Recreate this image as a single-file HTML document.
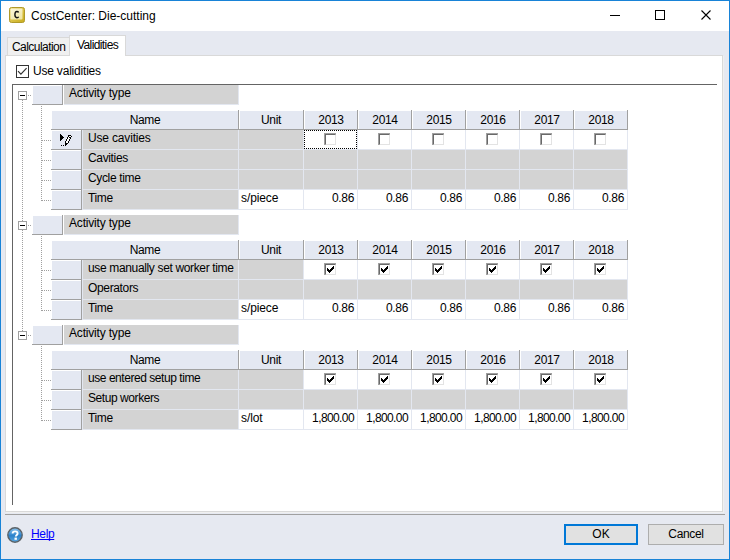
<!DOCTYPE html><html><head><meta charset="utf-8"><style>
html,body{margin:0;padding:0;}
body{width:730px;height:560px;position:relative;overflow:hidden;background:#e6e9f1;font-family:"Liberation Sans",sans-serif;font-size:12px;color:#000;letter-spacing:-0.35px;}
div{box-sizing:border-box;}
.t{position:absolute;white-space:nowrap;line-height:13px;height:13px;}
.c{position:absolute;white-space:nowrap;line-height:13px;height:13px;text-align:center;}
.r{position:absolute;white-space:nowrap;line-height:13px;height:13px;text-align:right;}
.dotv{position:absolute;width:1px;background:repeating-linear-gradient(to bottom,#a0a0a0 0 1px,transparent 1px 2px);}
.doth{position:absolute;height:1px;background:repeating-linear-gradient(to right,#a0a0a0 0 1px,transparent 1px 2px);}
</style></head><body>

<div style="position:absolute;left:0px;top:0px;width:730px;height:1px;background:#1883d7;"></div>
<div style="position:absolute;left:0px;top:559px;width:730px;height:1px;background:#1883d7;"></div>
<div style="position:absolute;left:0px;top:0px;width:1px;height:560px;background:#1883d7;"></div>
<div style="position:absolute;left:729px;top:0px;width:1px;height:560px;background:#1883d7;"></div>
<div style="position:absolute;left:1px;top:1px;width:728px;height:30px;background:#ffffff;"></div>
<svg style="position:absolute;left:9px;top:7px" width="16" height="16" viewBox="0 0 16 16"><defs><linearGradient id="ig" x1="0" y1="0" x2="1" y2="1"><stop offset="0" stop-color="#ecd870"/><stop offset="1" stop-color="#c8ac1c"/></linearGradient><linearGradient id="ig2" x1="0" y1="0" x2="0.7" y2="1"><stop offset="0" stop-color="#fbf7dc"/><stop offset="1" stop-color="#f0e6a8"/></linearGradient></defs><rect x="0.5" y="0.5" width="15" height="15" rx="2" fill="url(#ig)" stroke="#b09a2a" stroke-width="1"/><rect x="1.5" y="1.5" width="12" height="11" rx="1" fill="url(#ig2)"/><path d="M9.6 5.5 C9.3 4.8 8.7 4.5 7.9 4.5 C6.7 4.5 5.9 5.5 5.9 7.6 C5.9 9.7 6.7 10.7 7.9 10.7 C8.7 10.7 9.3 10.4 9.6 9.7" fill="none" stroke="#111" stroke-width="1.4"/></svg>
<div class="t" style="left:31px;top:9px;font-size:12px;line-height:15px;height:15px;color:#000;letter-spacing:0">CostCenter: Die-cutting</div>
<div style="position:absolute;left:610px;top:15px;width:10px;height:1px;background:#000;"></div>
<div style="position:absolute;left:655px;top:10px;width:10px;height:10px;border:1px solid #000"></div>
<svg style="position:absolute;left:700px;top:9px" width="12" height="12" viewBox="0 0 12 12"><path d="M1.5 1.5 L10.5 10.5 M10.5 1.5 L1.5 10.5" stroke="#000" stroke-width="1.1"/></svg>
<div style="position:absolute;left:7px;top:37px;width:63px;height:19px;background:#f0f0f0;border:1px solid #d9d9d9;border-bottom:none"></div>
<div style="position:absolute;left:5px;top:55px;width:718px;height:457px;background:#fff;border:1px solid #d9d9d9"></div>
<div style="position:absolute;left:723px;top:56px;width:1px;height:457px;background:#f0f0f0;"></div>
<div style="position:absolute;left:6px;top:512px;width:718px;height:1px;background:#f0f0f0;"></div>
<div style="position:absolute;left:69px;top:35px;width:57px;height:21px;background:#fff;border:1px solid #d9d9d9;border-bottom:none"></div>
<div class="t" style="left:12px;top:41px;letter-spacing:-0.55px">Calculation</div>
<div class="t" style="left:77px;top:39px;letter-spacing:-0.6px">Validities</div>
<div style="position:absolute;left:16px;top:65px;width:13px;height:13px;border:1px solid #333;background:#fff"></div>
<svg style="position:absolute;left:16px;top:65px" width="13" height="13" viewBox="0 0 13 13"><path d="M2 6.2 L4.9 9.1 L10.6 3.2" fill="none" stroke="#333" stroke-width="1.2"/></svg>
<div class="t" style="left:33px;top:65px;letter-spacing:-0.2px">Use validities</div>
<div style="position:absolute;left:12px;top:84px;width:705px;height:1px;background:#646464;"></div>
<div style="position:absolute;left:12px;top:84px;width:1px;height:421px;background:#646464;"></div>
<div class="dotv" style="left:22px;top:100px;height:231px"></div>
<div style="position:absolute;left:18px;top:91px;width:9px;height:9px;border:1px solid #a0a0a0;background:#fff"></div>
<div style="position:absolute;left:20px;top:95px;width:5px;height:1px;background:#000;"></div>
<div class="doth" style="left:28px;top:95px;width:4px"></div>
<div style="position:absolute;left:33px;top:86px;width:29px;height:18px;background:#e4e8f2;"></div>
<div style="position:absolute;left:62px;top:85px;width:1px;height:20px;background:#a0a0a0;"></div>
<div style="position:absolute;left:32px;top:104px;width:31px;height:1px;background:#a0a0a0;"></div>
<div style="position:absolute;left:64px;top:85px;width:174px;height:19px;background:#d3d3d3;"></div>
<div style="position:absolute;left:238px;top:85px;width:1px;height:20px;background:#e3e7f0;"></div>
<div style="position:absolute;left:64px;top:104px;width:175px;height:1px;background:#e3e7f0;"></div>
<div class="t" style="left:69px;top:87px;letter-spacing:-0.18px">Activity type</div>
<div style="position:absolute;left:52px;top:111px;width:576px;height:18px;background:#e4e8f2;"></div>
<div style="position:absolute;left:51px;top:129px;width:577px;height:1px;background:#a0a0a0;"></div>
<div style="position:absolute;left:238px;top:110px;width:1px;height:20px;background:#a0a0a0;"></div>
<div style="position:absolute;left:239px;top:111px;width:1px;height:18px;background:#fff;"></div>
<div style="position:absolute;left:303px;top:110px;width:1px;height:20px;background:#a0a0a0;"></div>
<div style="position:absolute;left:304px;top:111px;width:1px;height:18px;background:#fff;"></div>
<div style="position:absolute;left:357px;top:110px;width:1px;height:20px;background:#a0a0a0;"></div>
<div style="position:absolute;left:358px;top:111px;width:1px;height:18px;background:#fff;"></div>
<div style="position:absolute;left:411px;top:110px;width:1px;height:20px;background:#a0a0a0;"></div>
<div style="position:absolute;left:412px;top:111px;width:1px;height:18px;background:#fff;"></div>
<div style="position:absolute;left:465px;top:110px;width:1px;height:20px;background:#a0a0a0;"></div>
<div style="position:absolute;left:466px;top:111px;width:1px;height:18px;background:#fff;"></div>
<div style="position:absolute;left:519px;top:110px;width:1px;height:20px;background:#a0a0a0;"></div>
<div style="position:absolute;left:520px;top:111px;width:1px;height:18px;background:#fff;"></div>
<div style="position:absolute;left:573px;top:110px;width:1px;height:20px;background:#a0a0a0;"></div>
<div style="position:absolute;left:574px;top:111px;width:1px;height:18px;background:#fff;"></div>
<div style="position:absolute;left:627px;top:110px;width:1px;height:20px;background:#a0a0a0;"></div>
<div class="c" style="left:52px;top:114px;width:186px">Name</div>
<div class="c" style="left:239px;top:114px;width:64px">Unit</div>
<div class="c" style="left:304px;top:114px;width:54px">2013</div>
<div class="c" style="left:358px;top:114px;width:54px">2014</div>
<div class="c" style="left:412px;top:114px;width:54px">2015</div>
<div class="c" style="left:466px;top:114px;width:54px">2016</div>
<div class="c" style="left:520px;top:114px;width:54px">2017</div>
<div class="c" style="left:574px;top:114px;width:54px">2018</div>
<div class="dotv" style="left:41px;top:106px;height:95px"></div>
<div class="doth" style="left:42px;top:140px;width:9px"></div>
<div style="position:absolute;left:52px;top:130px;width:30px;height:20px;background:#e4e8f2;border-right:1px solid #a0a0a0;border-bottom:1px solid #a0a0a0"></div>
<div style="position:absolute;left:51px;top:149px;width:1px;height:1px;background:#a0a0a0;"></div>
<div style="position:absolute;left:52px;top:130px;width:29px;height:1px;background:#fff;"></div>
<div style="position:absolute;left:82px;top:130px;width:1px;height:20px;background:#e3e7f0;"></div>
<div style="position:absolute;left:83px;top:130px;width:155px;height:19px;background:#d3d3d3;"></div>
<div style="position:absolute;left:83px;top:149px;width:545px;height:1px;background:#e3e7f0;"></div>
<div class="t" style="left:88px;top:132px;letter-spacing:-0.17px">Use cavities</div>
<div style="position:absolute;left:238px;top:130px;width:1px;height:19px;background:#e3e7f0;"></div>
<div style="position:absolute;left:239px;top:130px;width:64px;height:19px;background:#d3d3d3;"></div>
<div style="position:absolute;left:303px;top:130px;width:1px;height:19px;background:#e3e7f0;"></div>
<div style="position:absolute;left:304px;top:130px;width:53px;height:19px;background:#fff;"></div>
<div style="position:absolute;left:357px;top:130px;width:1px;height:19px;background:#e3e7f0;"></div>
<div style="position:absolute;left:324px;top:133px;width:12px;height:12px;background:#fff;border-top:1px solid #a0a0a0;border-left:1px solid #a0a0a0"><div style="width:11px;height:11px;border-top:1px solid #696969;border-left:1px solid #696969;border-right:1px solid #e3e3e3;border-bottom:1px solid #e3e3e3"></div></div>
<div style="position:absolute;left:358px;top:130px;width:53px;height:19px;background:#fff;"></div>
<div style="position:absolute;left:411px;top:130px;width:1px;height:19px;background:#e3e7f0;"></div>
<div style="position:absolute;left:378px;top:133px;width:12px;height:12px;background:#fff;border-top:1px solid #a0a0a0;border-left:1px solid #a0a0a0"><div style="width:11px;height:11px;border-top:1px solid #696969;border-left:1px solid #696969;border-right:1px solid #e3e3e3;border-bottom:1px solid #e3e3e3"></div></div>
<div style="position:absolute;left:412px;top:130px;width:53px;height:19px;background:#fff;"></div>
<div style="position:absolute;left:465px;top:130px;width:1px;height:19px;background:#e3e7f0;"></div>
<div style="position:absolute;left:432px;top:133px;width:12px;height:12px;background:#fff;border-top:1px solid #a0a0a0;border-left:1px solid #a0a0a0"><div style="width:11px;height:11px;border-top:1px solid #696969;border-left:1px solid #696969;border-right:1px solid #e3e3e3;border-bottom:1px solid #e3e3e3"></div></div>
<div style="position:absolute;left:466px;top:130px;width:53px;height:19px;background:#fff;"></div>
<div style="position:absolute;left:519px;top:130px;width:1px;height:19px;background:#e3e7f0;"></div>
<div style="position:absolute;left:486px;top:133px;width:12px;height:12px;background:#fff;border-top:1px solid #a0a0a0;border-left:1px solid #a0a0a0"><div style="width:11px;height:11px;border-top:1px solid #696969;border-left:1px solid #696969;border-right:1px solid #e3e3e3;border-bottom:1px solid #e3e3e3"></div></div>
<div style="position:absolute;left:520px;top:130px;width:53px;height:19px;background:#fff;"></div>
<div style="position:absolute;left:573px;top:130px;width:1px;height:19px;background:#e3e7f0;"></div>
<div style="position:absolute;left:540px;top:133px;width:12px;height:12px;background:#fff;border-top:1px solid #a0a0a0;border-left:1px solid #a0a0a0"><div style="width:11px;height:11px;border-top:1px solid #696969;border-left:1px solid #696969;border-right:1px solid #e3e3e3;border-bottom:1px solid #e3e3e3"></div></div>
<div style="position:absolute;left:574px;top:130px;width:53px;height:19px;background:#fff;"></div>
<div style="position:absolute;left:627px;top:130px;width:1px;height:19px;background:#e3e7f0;"></div>
<div style="position:absolute;left:594px;top:133px;width:12px;height:12px;background:#fff;border-top:1px solid #a0a0a0;border-left:1px solid #a0a0a0"><div style="width:11px;height:11px;border-top:1px solid #696969;border-left:1px solid #696969;border-right:1px solid #e3e3e3;border-bottom:1px solid #e3e3e3"></div></div>
<svg style="position:absolute;left:58px;top:132px" width="16" height="16" viewBox="0 0 16 16" shape-rendering="crispEdges"><path d="M10 4h3v1h-3z M9 5h2v1h-2z M8 6h4v1h-4z M8 7h3v2h-3z M7 9h3v2h-3z" fill="#fff"/><path d="M2 2h1v1h-1zM2 3h1v1h-1zM2 4h1v1h-1zM2 5h1v1h-1zM2 6h1v1h-1zM2 7h1v1h-1zM2 8h1v1h-1zM3 3h1v1h-1zM3 4h1v1h-1zM3 5h1v1h-1zM3 6h1v1h-1zM3 7h1v1h-1zM4 4h1v1h-1zM4 5h1v1h-1zM4 6h1v1h-1zM5 5h1v1h-1zM10 3h1v1h-1zM11 3h1v1h-1zM12 3h1v1h-1zM10 4h1v1h-1zM13 4h1v1h-1zM9 5h1v1h-1zM11 5h1v1h-1zM12 5h1v1h-1zM9 6h1v1h-1zM12 6h1v1h-1zM8 7h1v1h-1zM11 7h1v1h-1zM8 8h1v1h-1zM11 8h1v1h-1zM7 9h1v1h-1zM10 9h1v1h-1zM7 10h1v1h-1zM10 10h1v1h-1zM7 11h1v1h-1zM8 11h1v1h-1zM9 11h1v1h-1zM7 12h1v1h-1zM8 12h1v1h-1zM7 13h1v1h-1zM3 13h1v1h-1zM5 13h1v1h-1z" fill="#000"/></svg>
<div class="doth" style="left:42px;top:160px;width:9px"></div>
<div style="position:absolute;left:52px;top:150px;width:30px;height:20px;background:#e4e8f2;border-right:1px solid #a0a0a0;border-bottom:1px solid #a0a0a0"></div>
<div style="position:absolute;left:51px;top:169px;width:1px;height:1px;background:#a0a0a0;"></div>
<div style="position:absolute;left:52px;top:150px;width:29px;height:1px;background:#fff;"></div>
<div style="position:absolute;left:82px;top:150px;width:1px;height:20px;background:#e3e7f0;"></div>
<div style="position:absolute;left:83px;top:150px;width:155px;height:19px;background:#d3d3d3;"></div>
<div style="position:absolute;left:83px;top:169px;width:545px;height:1px;background:#e3e7f0;"></div>
<div class="t" style="left:88px;top:152px;">Cavities</div>
<div style="position:absolute;left:238px;top:150px;width:1px;height:19px;background:#e3e7f0;"></div>
<div style="position:absolute;left:239px;top:150px;width:64px;height:19px;background:#d3d3d3;"></div>
<div style="position:absolute;left:303px;top:150px;width:1px;height:19px;background:#e3e7f0;"></div>
<div style="position:absolute;left:304px;top:150px;width:53px;height:19px;background:#d3d3d3;"></div>
<div style="position:absolute;left:357px;top:150px;width:1px;height:19px;background:#e3e7f0;"></div>
<div style="position:absolute;left:358px;top:150px;width:53px;height:19px;background:#d3d3d3;"></div>
<div style="position:absolute;left:411px;top:150px;width:1px;height:19px;background:#e3e7f0;"></div>
<div style="position:absolute;left:412px;top:150px;width:53px;height:19px;background:#d3d3d3;"></div>
<div style="position:absolute;left:465px;top:150px;width:1px;height:19px;background:#e3e7f0;"></div>
<div style="position:absolute;left:466px;top:150px;width:53px;height:19px;background:#d3d3d3;"></div>
<div style="position:absolute;left:519px;top:150px;width:1px;height:19px;background:#e3e7f0;"></div>
<div style="position:absolute;left:520px;top:150px;width:53px;height:19px;background:#d3d3d3;"></div>
<div style="position:absolute;left:573px;top:150px;width:1px;height:19px;background:#e3e7f0;"></div>
<div style="position:absolute;left:574px;top:150px;width:53px;height:19px;background:#d3d3d3;"></div>
<div style="position:absolute;left:627px;top:150px;width:1px;height:19px;background:#e3e7f0;"></div>
<div class="doth" style="left:42px;top:180px;width:9px"></div>
<div style="position:absolute;left:52px;top:170px;width:30px;height:20px;background:#e4e8f2;border-right:1px solid #a0a0a0;border-bottom:1px solid #a0a0a0"></div>
<div style="position:absolute;left:51px;top:189px;width:1px;height:1px;background:#a0a0a0;"></div>
<div style="position:absolute;left:52px;top:170px;width:29px;height:1px;background:#fff;"></div>
<div style="position:absolute;left:82px;top:170px;width:1px;height:20px;background:#e3e7f0;"></div>
<div style="position:absolute;left:83px;top:170px;width:155px;height:19px;background:#d3d3d3;"></div>
<div style="position:absolute;left:83px;top:189px;width:545px;height:1px;background:#e3e7f0;"></div>
<div class="t" style="left:88px;top:172px;">Cycle time</div>
<div style="position:absolute;left:238px;top:170px;width:1px;height:19px;background:#e3e7f0;"></div>
<div style="position:absolute;left:239px;top:170px;width:64px;height:19px;background:#d3d3d3;"></div>
<div style="position:absolute;left:303px;top:170px;width:1px;height:19px;background:#e3e7f0;"></div>
<div style="position:absolute;left:304px;top:170px;width:53px;height:19px;background:#d3d3d3;"></div>
<div style="position:absolute;left:357px;top:170px;width:1px;height:19px;background:#e3e7f0;"></div>
<div style="position:absolute;left:358px;top:170px;width:53px;height:19px;background:#d3d3d3;"></div>
<div style="position:absolute;left:411px;top:170px;width:1px;height:19px;background:#e3e7f0;"></div>
<div style="position:absolute;left:412px;top:170px;width:53px;height:19px;background:#d3d3d3;"></div>
<div style="position:absolute;left:465px;top:170px;width:1px;height:19px;background:#e3e7f0;"></div>
<div style="position:absolute;left:466px;top:170px;width:53px;height:19px;background:#d3d3d3;"></div>
<div style="position:absolute;left:519px;top:170px;width:1px;height:19px;background:#e3e7f0;"></div>
<div style="position:absolute;left:520px;top:170px;width:53px;height:19px;background:#d3d3d3;"></div>
<div style="position:absolute;left:573px;top:170px;width:1px;height:19px;background:#e3e7f0;"></div>
<div style="position:absolute;left:574px;top:170px;width:53px;height:19px;background:#d3d3d3;"></div>
<div style="position:absolute;left:627px;top:170px;width:1px;height:19px;background:#e3e7f0;"></div>
<div class="doth" style="left:42px;top:200px;width:9px"></div>
<div style="position:absolute;left:52px;top:190px;width:30px;height:20px;background:#e4e8f2;border-right:1px solid #a0a0a0;border-bottom:1px solid #a0a0a0"></div>
<div style="position:absolute;left:51px;top:209px;width:1px;height:1px;background:#a0a0a0;"></div>
<div style="position:absolute;left:52px;top:190px;width:29px;height:1px;background:#fff;"></div>
<div style="position:absolute;left:82px;top:190px;width:1px;height:20px;background:#e3e7f0;"></div>
<div style="position:absolute;left:83px;top:190px;width:155px;height:19px;background:#d3d3d3;"></div>
<div style="position:absolute;left:83px;top:209px;width:545px;height:1px;background:#e3e7f0;"></div>
<div class="t" style="left:88px;top:192px;">Time</div>
<div style="position:absolute;left:238px;top:190px;width:1px;height:19px;background:#e3e7f0;"></div>
<div style="position:absolute;left:239px;top:190px;width:64px;height:19px;background:#fff;"></div>
<div class="t" style="left:241px;top:192px;letter-spacing:-0.1px">s/piece</div>
<div style="position:absolute;left:303px;top:190px;width:1px;height:19px;background:#e3e7f0;"></div>
<div style="position:absolute;left:304px;top:190px;width:53px;height:19px;background:#fff;"></div>
<div style="position:absolute;left:357px;top:190px;width:1px;height:19px;background:#e3e7f0;"></div>
<div class="r" style="left:304px;top:192px;width:50px;letter-spacing:-0.35px">0.86</div>
<div style="position:absolute;left:358px;top:190px;width:53px;height:19px;background:#fff;"></div>
<div style="position:absolute;left:411px;top:190px;width:1px;height:19px;background:#e3e7f0;"></div>
<div class="r" style="left:358px;top:192px;width:50px;letter-spacing:-0.35px">0.86</div>
<div style="position:absolute;left:412px;top:190px;width:53px;height:19px;background:#fff;"></div>
<div style="position:absolute;left:465px;top:190px;width:1px;height:19px;background:#e3e7f0;"></div>
<div class="r" style="left:412px;top:192px;width:50px;letter-spacing:-0.35px">0.86</div>
<div style="position:absolute;left:466px;top:190px;width:53px;height:19px;background:#fff;"></div>
<div style="position:absolute;left:519px;top:190px;width:1px;height:19px;background:#e3e7f0;"></div>
<div class="r" style="left:466px;top:192px;width:50px;letter-spacing:-0.35px">0.86</div>
<div style="position:absolute;left:520px;top:190px;width:53px;height:19px;background:#fff;"></div>
<div style="position:absolute;left:573px;top:190px;width:1px;height:19px;background:#e3e7f0;"></div>
<div class="r" style="left:520px;top:192px;width:50px;letter-spacing:-0.35px">0.86</div>
<div style="position:absolute;left:574px;top:190px;width:53px;height:19px;background:#fff;"></div>
<div style="position:absolute;left:627px;top:190px;width:1px;height:19px;background:#e3e7f0;"></div>
<div class="r" style="left:574px;top:192px;width:50px;letter-spacing:-0.35px">0.86</div>
<div style="position:absolute;left:304px;top:130px;width:53px;height:19px;border:1px dotted #000"></div>
<div style="position:absolute;left:18px;top:221px;width:9px;height:9px;border:1px solid #a0a0a0;background:#fff"></div>
<div style="position:absolute;left:20px;top:225px;width:5px;height:1px;background:#000;"></div>
<div class="doth" style="left:28px;top:225px;width:4px"></div>
<div style="position:absolute;left:33px;top:216px;width:29px;height:18px;background:#e4e8f2;"></div>
<div style="position:absolute;left:62px;top:215px;width:1px;height:20px;background:#a0a0a0;"></div>
<div style="position:absolute;left:32px;top:234px;width:31px;height:1px;background:#a0a0a0;"></div>
<div style="position:absolute;left:64px;top:215px;width:174px;height:19px;background:#d3d3d3;"></div>
<div style="position:absolute;left:238px;top:215px;width:1px;height:20px;background:#e3e7f0;"></div>
<div style="position:absolute;left:64px;top:234px;width:175px;height:1px;background:#e3e7f0;"></div>
<div class="t" style="left:69px;top:217px;letter-spacing:-0.18px">Activity type</div>
<div style="position:absolute;left:52px;top:241px;width:576px;height:18px;background:#e4e8f2;"></div>
<div style="position:absolute;left:51px;top:259px;width:577px;height:1px;background:#a0a0a0;"></div>
<div style="position:absolute;left:238px;top:240px;width:1px;height:20px;background:#a0a0a0;"></div>
<div style="position:absolute;left:239px;top:241px;width:1px;height:18px;background:#fff;"></div>
<div style="position:absolute;left:303px;top:240px;width:1px;height:20px;background:#a0a0a0;"></div>
<div style="position:absolute;left:304px;top:241px;width:1px;height:18px;background:#fff;"></div>
<div style="position:absolute;left:357px;top:240px;width:1px;height:20px;background:#a0a0a0;"></div>
<div style="position:absolute;left:358px;top:241px;width:1px;height:18px;background:#fff;"></div>
<div style="position:absolute;left:411px;top:240px;width:1px;height:20px;background:#a0a0a0;"></div>
<div style="position:absolute;left:412px;top:241px;width:1px;height:18px;background:#fff;"></div>
<div style="position:absolute;left:465px;top:240px;width:1px;height:20px;background:#a0a0a0;"></div>
<div style="position:absolute;left:466px;top:241px;width:1px;height:18px;background:#fff;"></div>
<div style="position:absolute;left:519px;top:240px;width:1px;height:20px;background:#a0a0a0;"></div>
<div style="position:absolute;left:520px;top:241px;width:1px;height:18px;background:#fff;"></div>
<div style="position:absolute;left:573px;top:240px;width:1px;height:20px;background:#a0a0a0;"></div>
<div style="position:absolute;left:574px;top:241px;width:1px;height:18px;background:#fff;"></div>
<div style="position:absolute;left:627px;top:240px;width:1px;height:20px;background:#a0a0a0;"></div>
<div class="c" style="left:52px;top:244px;width:186px">Name</div>
<div class="c" style="left:239px;top:244px;width:64px">Unit</div>
<div class="c" style="left:304px;top:244px;width:54px">2013</div>
<div class="c" style="left:358px;top:244px;width:54px">2014</div>
<div class="c" style="left:412px;top:244px;width:54px">2015</div>
<div class="c" style="left:466px;top:244px;width:54px">2016</div>
<div class="c" style="left:520px;top:244px;width:54px">2017</div>
<div class="c" style="left:574px;top:244px;width:54px">2018</div>
<div class="dotv" style="left:41px;top:236px;height:75px"></div>
<div class="doth" style="left:42px;top:270px;width:9px"></div>
<div style="position:absolute;left:52px;top:260px;width:30px;height:20px;background:#e4e8f2;border-right:1px solid #a0a0a0;border-bottom:1px solid #a0a0a0"></div>
<div style="position:absolute;left:51px;top:279px;width:1px;height:1px;background:#a0a0a0;"></div>
<div style="position:absolute;left:52px;top:260px;width:29px;height:1px;background:#fff;"></div>
<div style="position:absolute;left:82px;top:260px;width:1px;height:20px;background:#e3e7f0;"></div>
<div style="position:absolute;left:83px;top:260px;width:155px;height:19px;background:#d3d3d3;"></div>
<div style="position:absolute;left:83px;top:279px;width:545px;height:1px;background:#e3e7f0;"></div>
<div class="t" style="left:88px;top:262px;">use manually set worker time</div>
<div style="position:absolute;left:238px;top:260px;width:1px;height:19px;background:#e3e7f0;"></div>
<div style="position:absolute;left:239px;top:260px;width:64px;height:19px;background:#d3d3d3;"></div>
<div style="position:absolute;left:303px;top:260px;width:1px;height:19px;background:#e3e7f0;"></div>
<div style="position:absolute;left:304px;top:260px;width:53px;height:19px;background:#fff;"></div>
<div style="position:absolute;left:357px;top:260px;width:1px;height:19px;background:#e3e7f0;"></div>
<div style="position:absolute;left:324px;top:263px;width:12px;height:12px;background:#fff;border-top:1px solid #a0a0a0;border-left:1px solid #a0a0a0"><div style="width:11px;height:11px;border-top:1px solid #696969;border-left:1px solid #696969;border-right:1px solid #e3e3e3;border-bottom:1px solid #e3e3e3"></div></div>
<svg style="position:absolute;left:327px;top:266px" width="7" height="7" viewBox="0 0 7 7"><path d="M0 2h1v3h-1z M1 3h1v3h-1z M2 4h1v3h-1z M3 3h1v3h-1z M4 2h1v3h-1z M5 1h1v3h-1z M6 0h1v3h-1z" fill="#000"/></svg>
<div style="position:absolute;left:358px;top:260px;width:53px;height:19px;background:#fff;"></div>
<div style="position:absolute;left:411px;top:260px;width:1px;height:19px;background:#e3e7f0;"></div>
<div style="position:absolute;left:378px;top:263px;width:12px;height:12px;background:#fff;border-top:1px solid #a0a0a0;border-left:1px solid #a0a0a0"><div style="width:11px;height:11px;border-top:1px solid #696969;border-left:1px solid #696969;border-right:1px solid #e3e3e3;border-bottom:1px solid #e3e3e3"></div></div>
<svg style="position:absolute;left:381px;top:266px" width="7" height="7" viewBox="0 0 7 7"><path d="M0 2h1v3h-1z M1 3h1v3h-1z M2 4h1v3h-1z M3 3h1v3h-1z M4 2h1v3h-1z M5 1h1v3h-1z M6 0h1v3h-1z" fill="#000"/></svg>
<div style="position:absolute;left:412px;top:260px;width:53px;height:19px;background:#fff;"></div>
<div style="position:absolute;left:465px;top:260px;width:1px;height:19px;background:#e3e7f0;"></div>
<div style="position:absolute;left:432px;top:263px;width:12px;height:12px;background:#fff;border-top:1px solid #a0a0a0;border-left:1px solid #a0a0a0"><div style="width:11px;height:11px;border-top:1px solid #696969;border-left:1px solid #696969;border-right:1px solid #e3e3e3;border-bottom:1px solid #e3e3e3"></div></div>
<svg style="position:absolute;left:435px;top:266px" width="7" height="7" viewBox="0 0 7 7"><path d="M0 2h1v3h-1z M1 3h1v3h-1z M2 4h1v3h-1z M3 3h1v3h-1z M4 2h1v3h-1z M5 1h1v3h-1z M6 0h1v3h-1z" fill="#000"/></svg>
<div style="position:absolute;left:466px;top:260px;width:53px;height:19px;background:#fff;"></div>
<div style="position:absolute;left:519px;top:260px;width:1px;height:19px;background:#e3e7f0;"></div>
<div style="position:absolute;left:486px;top:263px;width:12px;height:12px;background:#fff;border-top:1px solid #a0a0a0;border-left:1px solid #a0a0a0"><div style="width:11px;height:11px;border-top:1px solid #696969;border-left:1px solid #696969;border-right:1px solid #e3e3e3;border-bottom:1px solid #e3e3e3"></div></div>
<svg style="position:absolute;left:489px;top:266px" width="7" height="7" viewBox="0 0 7 7"><path d="M0 2h1v3h-1z M1 3h1v3h-1z M2 4h1v3h-1z M3 3h1v3h-1z M4 2h1v3h-1z M5 1h1v3h-1z M6 0h1v3h-1z" fill="#000"/></svg>
<div style="position:absolute;left:520px;top:260px;width:53px;height:19px;background:#fff;"></div>
<div style="position:absolute;left:573px;top:260px;width:1px;height:19px;background:#e3e7f0;"></div>
<div style="position:absolute;left:540px;top:263px;width:12px;height:12px;background:#fff;border-top:1px solid #a0a0a0;border-left:1px solid #a0a0a0"><div style="width:11px;height:11px;border-top:1px solid #696969;border-left:1px solid #696969;border-right:1px solid #e3e3e3;border-bottom:1px solid #e3e3e3"></div></div>
<svg style="position:absolute;left:543px;top:266px" width="7" height="7" viewBox="0 0 7 7"><path d="M0 2h1v3h-1z M1 3h1v3h-1z M2 4h1v3h-1z M3 3h1v3h-1z M4 2h1v3h-1z M5 1h1v3h-1z M6 0h1v3h-1z" fill="#000"/></svg>
<div style="position:absolute;left:574px;top:260px;width:53px;height:19px;background:#fff;"></div>
<div style="position:absolute;left:627px;top:260px;width:1px;height:19px;background:#e3e7f0;"></div>
<div style="position:absolute;left:594px;top:263px;width:12px;height:12px;background:#fff;border-top:1px solid #a0a0a0;border-left:1px solid #a0a0a0"><div style="width:11px;height:11px;border-top:1px solid #696969;border-left:1px solid #696969;border-right:1px solid #e3e3e3;border-bottom:1px solid #e3e3e3"></div></div>
<svg style="position:absolute;left:597px;top:266px" width="7" height="7" viewBox="0 0 7 7"><path d="M0 2h1v3h-1z M1 3h1v3h-1z M2 4h1v3h-1z M3 3h1v3h-1z M4 2h1v3h-1z M5 1h1v3h-1z M6 0h1v3h-1z" fill="#000"/></svg>
<div class="doth" style="left:42px;top:290px;width:9px"></div>
<div style="position:absolute;left:52px;top:280px;width:30px;height:20px;background:#e4e8f2;border-right:1px solid #a0a0a0;border-bottom:1px solid #a0a0a0"></div>
<div style="position:absolute;left:51px;top:299px;width:1px;height:1px;background:#a0a0a0;"></div>
<div style="position:absolute;left:52px;top:280px;width:29px;height:1px;background:#fff;"></div>
<div style="position:absolute;left:82px;top:280px;width:1px;height:20px;background:#e3e7f0;"></div>
<div style="position:absolute;left:83px;top:280px;width:155px;height:19px;background:#d3d3d3;"></div>
<div style="position:absolute;left:83px;top:299px;width:545px;height:1px;background:#e3e7f0;"></div>
<div class="t" style="left:88px;top:282px;">Operators</div>
<div style="position:absolute;left:238px;top:280px;width:1px;height:19px;background:#e3e7f0;"></div>
<div style="position:absolute;left:239px;top:280px;width:64px;height:19px;background:#d3d3d3;"></div>
<div style="position:absolute;left:303px;top:280px;width:1px;height:19px;background:#e3e7f0;"></div>
<div style="position:absolute;left:304px;top:280px;width:53px;height:19px;background:#d3d3d3;"></div>
<div style="position:absolute;left:357px;top:280px;width:1px;height:19px;background:#e3e7f0;"></div>
<div style="position:absolute;left:358px;top:280px;width:53px;height:19px;background:#d3d3d3;"></div>
<div style="position:absolute;left:411px;top:280px;width:1px;height:19px;background:#e3e7f0;"></div>
<div style="position:absolute;left:412px;top:280px;width:53px;height:19px;background:#d3d3d3;"></div>
<div style="position:absolute;left:465px;top:280px;width:1px;height:19px;background:#e3e7f0;"></div>
<div style="position:absolute;left:466px;top:280px;width:53px;height:19px;background:#d3d3d3;"></div>
<div style="position:absolute;left:519px;top:280px;width:1px;height:19px;background:#e3e7f0;"></div>
<div style="position:absolute;left:520px;top:280px;width:53px;height:19px;background:#d3d3d3;"></div>
<div style="position:absolute;left:573px;top:280px;width:1px;height:19px;background:#e3e7f0;"></div>
<div style="position:absolute;left:574px;top:280px;width:53px;height:19px;background:#d3d3d3;"></div>
<div style="position:absolute;left:627px;top:280px;width:1px;height:19px;background:#e3e7f0;"></div>
<div class="doth" style="left:42px;top:310px;width:9px"></div>
<div style="position:absolute;left:52px;top:300px;width:30px;height:20px;background:#e4e8f2;border-right:1px solid #a0a0a0;border-bottom:1px solid #a0a0a0"></div>
<div style="position:absolute;left:51px;top:319px;width:1px;height:1px;background:#a0a0a0;"></div>
<div style="position:absolute;left:52px;top:300px;width:29px;height:1px;background:#fff;"></div>
<div style="position:absolute;left:82px;top:300px;width:1px;height:20px;background:#e3e7f0;"></div>
<div style="position:absolute;left:83px;top:300px;width:155px;height:19px;background:#d3d3d3;"></div>
<div style="position:absolute;left:83px;top:319px;width:545px;height:1px;background:#e3e7f0;"></div>
<div class="t" style="left:88px;top:302px;">Time</div>
<div style="position:absolute;left:238px;top:300px;width:1px;height:19px;background:#e3e7f0;"></div>
<div style="position:absolute;left:239px;top:300px;width:64px;height:19px;background:#fff;"></div>
<div class="t" style="left:241px;top:302px;letter-spacing:-0.1px">s/piece</div>
<div style="position:absolute;left:303px;top:300px;width:1px;height:19px;background:#e3e7f0;"></div>
<div style="position:absolute;left:304px;top:300px;width:53px;height:19px;background:#fff;"></div>
<div style="position:absolute;left:357px;top:300px;width:1px;height:19px;background:#e3e7f0;"></div>
<div class="r" style="left:304px;top:302px;width:50px;letter-spacing:-0.35px">0.86</div>
<div style="position:absolute;left:358px;top:300px;width:53px;height:19px;background:#fff;"></div>
<div style="position:absolute;left:411px;top:300px;width:1px;height:19px;background:#e3e7f0;"></div>
<div class="r" style="left:358px;top:302px;width:50px;letter-spacing:-0.35px">0.86</div>
<div style="position:absolute;left:412px;top:300px;width:53px;height:19px;background:#fff;"></div>
<div style="position:absolute;left:465px;top:300px;width:1px;height:19px;background:#e3e7f0;"></div>
<div class="r" style="left:412px;top:302px;width:50px;letter-spacing:-0.35px">0.86</div>
<div style="position:absolute;left:466px;top:300px;width:53px;height:19px;background:#fff;"></div>
<div style="position:absolute;left:519px;top:300px;width:1px;height:19px;background:#e3e7f0;"></div>
<div class="r" style="left:466px;top:302px;width:50px;letter-spacing:-0.35px">0.86</div>
<div style="position:absolute;left:520px;top:300px;width:53px;height:19px;background:#fff;"></div>
<div style="position:absolute;left:573px;top:300px;width:1px;height:19px;background:#e3e7f0;"></div>
<div class="r" style="left:520px;top:302px;width:50px;letter-spacing:-0.35px">0.86</div>
<div style="position:absolute;left:574px;top:300px;width:53px;height:19px;background:#fff;"></div>
<div style="position:absolute;left:627px;top:300px;width:1px;height:19px;background:#e3e7f0;"></div>
<div class="r" style="left:574px;top:302px;width:50px;letter-spacing:-0.35px">0.86</div>
<div style="position:absolute;left:18px;top:331px;width:9px;height:9px;border:1px solid #a0a0a0;background:#fff"></div>
<div style="position:absolute;left:20px;top:335px;width:5px;height:1px;background:#000;"></div>
<div class="doth" style="left:28px;top:335px;width:4px"></div>
<div style="position:absolute;left:33px;top:326px;width:29px;height:18px;background:#e4e8f2;"></div>
<div style="position:absolute;left:62px;top:325px;width:1px;height:20px;background:#a0a0a0;"></div>
<div style="position:absolute;left:32px;top:344px;width:31px;height:1px;background:#a0a0a0;"></div>
<div style="position:absolute;left:64px;top:325px;width:174px;height:19px;background:#d3d3d3;"></div>
<div style="position:absolute;left:238px;top:325px;width:1px;height:20px;background:#e3e7f0;"></div>
<div style="position:absolute;left:64px;top:344px;width:175px;height:1px;background:#e3e7f0;"></div>
<div class="t" style="left:69px;top:327px;letter-spacing:-0.18px">Activity type</div>
<div style="position:absolute;left:52px;top:351px;width:576px;height:18px;background:#e4e8f2;"></div>
<div style="position:absolute;left:51px;top:369px;width:577px;height:1px;background:#a0a0a0;"></div>
<div style="position:absolute;left:238px;top:350px;width:1px;height:20px;background:#a0a0a0;"></div>
<div style="position:absolute;left:239px;top:351px;width:1px;height:18px;background:#fff;"></div>
<div style="position:absolute;left:303px;top:350px;width:1px;height:20px;background:#a0a0a0;"></div>
<div style="position:absolute;left:304px;top:351px;width:1px;height:18px;background:#fff;"></div>
<div style="position:absolute;left:357px;top:350px;width:1px;height:20px;background:#a0a0a0;"></div>
<div style="position:absolute;left:358px;top:351px;width:1px;height:18px;background:#fff;"></div>
<div style="position:absolute;left:411px;top:350px;width:1px;height:20px;background:#a0a0a0;"></div>
<div style="position:absolute;left:412px;top:351px;width:1px;height:18px;background:#fff;"></div>
<div style="position:absolute;left:465px;top:350px;width:1px;height:20px;background:#a0a0a0;"></div>
<div style="position:absolute;left:466px;top:351px;width:1px;height:18px;background:#fff;"></div>
<div style="position:absolute;left:519px;top:350px;width:1px;height:20px;background:#a0a0a0;"></div>
<div style="position:absolute;left:520px;top:351px;width:1px;height:18px;background:#fff;"></div>
<div style="position:absolute;left:573px;top:350px;width:1px;height:20px;background:#a0a0a0;"></div>
<div style="position:absolute;left:574px;top:351px;width:1px;height:18px;background:#fff;"></div>
<div style="position:absolute;left:627px;top:350px;width:1px;height:20px;background:#a0a0a0;"></div>
<div class="c" style="left:52px;top:354px;width:186px">Name</div>
<div class="c" style="left:239px;top:354px;width:64px">Unit</div>
<div class="c" style="left:304px;top:354px;width:54px">2013</div>
<div class="c" style="left:358px;top:354px;width:54px">2014</div>
<div class="c" style="left:412px;top:354px;width:54px">2015</div>
<div class="c" style="left:466px;top:354px;width:54px">2016</div>
<div class="c" style="left:520px;top:354px;width:54px">2017</div>
<div class="c" style="left:574px;top:354px;width:54px">2018</div>
<div class="dotv" style="left:41px;top:346px;height:75px"></div>
<div class="doth" style="left:42px;top:380px;width:9px"></div>
<div style="position:absolute;left:52px;top:370px;width:30px;height:20px;background:#e4e8f2;border-right:1px solid #a0a0a0;border-bottom:1px solid #a0a0a0"></div>
<div style="position:absolute;left:51px;top:389px;width:1px;height:1px;background:#a0a0a0;"></div>
<div style="position:absolute;left:52px;top:370px;width:29px;height:1px;background:#fff;"></div>
<div style="position:absolute;left:82px;top:370px;width:1px;height:20px;background:#e3e7f0;"></div>
<div style="position:absolute;left:83px;top:370px;width:155px;height:19px;background:#d3d3d3;"></div>
<div style="position:absolute;left:83px;top:389px;width:545px;height:1px;background:#e3e7f0;"></div>
<div class="t" style="left:88px;top:372px;letter-spacing:-0.45px">use entered setup time</div>
<div style="position:absolute;left:238px;top:370px;width:1px;height:19px;background:#e3e7f0;"></div>
<div style="position:absolute;left:239px;top:370px;width:64px;height:19px;background:#d3d3d3;"></div>
<div style="position:absolute;left:303px;top:370px;width:1px;height:19px;background:#e3e7f0;"></div>
<div style="position:absolute;left:304px;top:370px;width:53px;height:19px;background:#fff;"></div>
<div style="position:absolute;left:357px;top:370px;width:1px;height:19px;background:#e3e7f0;"></div>
<div style="position:absolute;left:324px;top:373px;width:12px;height:12px;background:#fff;border-top:1px solid #a0a0a0;border-left:1px solid #a0a0a0"><div style="width:11px;height:11px;border-top:1px solid #696969;border-left:1px solid #696969;border-right:1px solid #e3e3e3;border-bottom:1px solid #e3e3e3"></div></div>
<svg style="position:absolute;left:327px;top:376px" width="7" height="7" viewBox="0 0 7 7"><path d="M0 2h1v3h-1z M1 3h1v3h-1z M2 4h1v3h-1z M3 3h1v3h-1z M4 2h1v3h-1z M5 1h1v3h-1z M6 0h1v3h-1z" fill="#000"/></svg>
<div style="position:absolute;left:358px;top:370px;width:53px;height:19px;background:#fff;"></div>
<div style="position:absolute;left:411px;top:370px;width:1px;height:19px;background:#e3e7f0;"></div>
<div style="position:absolute;left:378px;top:373px;width:12px;height:12px;background:#fff;border-top:1px solid #a0a0a0;border-left:1px solid #a0a0a0"><div style="width:11px;height:11px;border-top:1px solid #696969;border-left:1px solid #696969;border-right:1px solid #e3e3e3;border-bottom:1px solid #e3e3e3"></div></div>
<svg style="position:absolute;left:381px;top:376px" width="7" height="7" viewBox="0 0 7 7"><path d="M0 2h1v3h-1z M1 3h1v3h-1z M2 4h1v3h-1z M3 3h1v3h-1z M4 2h1v3h-1z M5 1h1v3h-1z M6 0h1v3h-1z" fill="#000"/></svg>
<div style="position:absolute;left:412px;top:370px;width:53px;height:19px;background:#fff;"></div>
<div style="position:absolute;left:465px;top:370px;width:1px;height:19px;background:#e3e7f0;"></div>
<div style="position:absolute;left:432px;top:373px;width:12px;height:12px;background:#fff;border-top:1px solid #a0a0a0;border-left:1px solid #a0a0a0"><div style="width:11px;height:11px;border-top:1px solid #696969;border-left:1px solid #696969;border-right:1px solid #e3e3e3;border-bottom:1px solid #e3e3e3"></div></div>
<svg style="position:absolute;left:435px;top:376px" width="7" height="7" viewBox="0 0 7 7"><path d="M0 2h1v3h-1z M1 3h1v3h-1z M2 4h1v3h-1z M3 3h1v3h-1z M4 2h1v3h-1z M5 1h1v3h-1z M6 0h1v3h-1z" fill="#000"/></svg>
<div style="position:absolute;left:466px;top:370px;width:53px;height:19px;background:#fff;"></div>
<div style="position:absolute;left:519px;top:370px;width:1px;height:19px;background:#e3e7f0;"></div>
<div style="position:absolute;left:486px;top:373px;width:12px;height:12px;background:#fff;border-top:1px solid #a0a0a0;border-left:1px solid #a0a0a0"><div style="width:11px;height:11px;border-top:1px solid #696969;border-left:1px solid #696969;border-right:1px solid #e3e3e3;border-bottom:1px solid #e3e3e3"></div></div>
<svg style="position:absolute;left:489px;top:376px" width="7" height="7" viewBox="0 0 7 7"><path d="M0 2h1v3h-1z M1 3h1v3h-1z M2 4h1v3h-1z M3 3h1v3h-1z M4 2h1v3h-1z M5 1h1v3h-1z M6 0h1v3h-1z" fill="#000"/></svg>
<div style="position:absolute;left:520px;top:370px;width:53px;height:19px;background:#fff;"></div>
<div style="position:absolute;left:573px;top:370px;width:1px;height:19px;background:#e3e7f0;"></div>
<div style="position:absolute;left:540px;top:373px;width:12px;height:12px;background:#fff;border-top:1px solid #a0a0a0;border-left:1px solid #a0a0a0"><div style="width:11px;height:11px;border-top:1px solid #696969;border-left:1px solid #696969;border-right:1px solid #e3e3e3;border-bottom:1px solid #e3e3e3"></div></div>
<svg style="position:absolute;left:543px;top:376px" width="7" height="7" viewBox="0 0 7 7"><path d="M0 2h1v3h-1z M1 3h1v3h-1z M2 4h1v3h-1z M3 3h1v3h-1z M4 2h1v3h-1z M5 1h1v3h-1z M6 0h1v3h-1z" fill="#000"/></svg>
<div style="position:absolute;left:574px;top:370px;width:53px;height:19px;background:#fff;"></div>
<div style="position:absolute;left:627px;top:370px;width:1px;height:19px;background:#e3e7f0;"></div>
<div style="position:absolute;left:594px;top:373px;width:12px;height:12px;background:#fff;border-top:1px solid #a0a0a0;border-left:1px solid #a0a0a0"><div style="width:11px;height:11px;border-top:1px solid #696969;border-left:1px solid #696969;border-right:1px solid #e3e3e3;border-bottom:1px solid #e3e3e3"></div></div>
<svg style="position:absolute;left:597px;top:376px" width="7" height="7" viewBox="0 0 7 7"><path d="M0 2h1v3h-1z M1 3h1v3h-1z M2 4h1v3h-1z M3 3h1v3h-1z M4 2h1v3h-1z M5 1h1v3h-1z M6 0h1v3h-1z" fill="#000"/></svg>
<div class="doth" style="left:42px;top:400px;width:9px"></div>
<div style="position:absolute;left:52px;top:390px;width:30px;height:20px;background:#e4e8f2;border-right:1px solid #a0a0a0;border-bottom:1px solid #a0a0a0"></div>
<div style="position:absolute;left:51px;top:409px;width:1px;height:1px;background:#a0a0a0;"></div>
<div style="position:absolute;left:52px;top:390px;width:29px;height:1px;background:#fff;"></div>
<div style="position:absolute;left:82px;top:390px;width:1px;height:20px;background:#e3e7f0;"></div>
<div style="position:absolute;left:83px;top:390px;width:155px;height:19px;background:#d3d3d3;"></div>
<div style="position:absolute;left:83px;top:409px;width:545px;height:1px;background:#e3e7f0;"></div>
<div class="t" style="left:88px;top:392px;letter-spacing:-0.43px">Setup workers</div>
<div style="position:absolute;left:238px;top:390px;width:1px;height:19px;background:#e3e7f0;"></div>
<div style="position:absolute;left:239px;top:390px;width:64px;height:19px;background:#d3d3d3;"></div>
<div style="position:absolute;left:303px;top:390px;width:1px;height:19px;background:#e3e7f0;"></div>
<div style="position:absolute;left:304px;top:390px;width:53px;height:19px;background:#d3d3d3;"></div>
<div style="position:absolute;left:357px;top:390px;width:1px;height:19px;background:#e3e7f0;"></div>
<div style="position:absolute;left:358px;top:390px;width:53px;height:19px;background:#d3d3d3;"></div>
<div style="position:absolute;left:411px;top:390px;width:1px;height:19px;background:#e3e7f0;"></div>
<div style="position:absolute;left:412px;top:390px;width:53px;height:19px;background:#d3d3d3;"></div>
<div style="position:absolute;left:465px;top:390px;width:1px;height:19px;background:#e3e7f0;"></div>
<div style="position:absolute;left:466px;top:390px;width:53px;height:19px;background:#d3d3d3;"></div>
<div style="position:absolute;left:519px;top:390px;width:1px;height:19px;background:#e3e7f0;"></div>
<div style="position:absolute;left:520px;top:390px;width:53px;height:19px;background:#d3d3d3;"></div>
<div style="position:absolute;left:573px;top:390px;width:1px;height:19px;background:#e3e7f0;"></div>
<div style="position:absolute;left:574px;top:390px;width:53px;height:19px;background:#d3d3d3;"></div>
<div style="position:absolute;left:627px;top:390px;width:1px;height:19px;background:#e3e7f0;"></div>
<div class="doth" style="left:42px;top:420px;width:9px"></div>
<div style="position:absolute;left:52px;top:410px;width:30px;height:20px;background:#e4e8f2;border-right:1px solid #a0a0a0;border-bottom:1px solid #a0a0a0"></div>
<div style="position:absolute;left:51px;top:429px;width:1px;height:1px;background:#a0a0a0;"></div>
<div style="position:absolute;left:52px;top:410px;width:29px;height:1px;background:#fff;"></div>
<div style="position:absolute;left:82px;top:410px;width:1px;height:20px;background:#e3e7f0;"></div>
<div style="position:absolute;left:83px;top:410px;width:155px;height:19px;background:#d3d3d3;"></div>
<div style="position:absolute;left:83px;top:429px;width:545px;height:1px;background:#e3e7f0;"></div>
<div class="t" style="left:88px;top:412px;">Time</div>
<div style="position:absolute;left:238px;top:410px;width:1px;height:19px;background:#e3e7f0;"></div>
<div style="position:absolute;left:239px;top:410px;width:64px;height:19px;background:#fff;"></div>
<div class="t" style="left:241px;top:412px;letter-spacing:-0.1px">s/lot</div>
<div style="position:absolute;left:303px;top:410px;width:1px;height:19px;background:#e3e7f0;"></div>
<div style="position:absolute;left:304px;top:410px;width:53px;height:19px;background:#fff;"></div>
<div style="position:absolute;left:357px;top:410px;width:1px;height:19px;background:#e3e7f0;"></div>
<div class="r" style="left:304px;top:412px;width:50px;letter-spacing:-0.6px">1,800.00</div>
<div style="position:absolute;left:358px;top:410px;width:53px;height:19px;background:#fff;"></div>
<div style="position:absolute;left:411px;top:410px;width:1px;height:19px;background:#e3e7f0;"></div>
<div class="r" style="left:358px;top:412px;width:50px;letter-spacing:-0.6px">1,800.00</div>
<div style="position:absolute;left:412px;top:410px;width:53px;height:19px;background:#fff;"></div>
<div style="position:absolute;left:465px;top:410px;width:1px;height:19px;background:#e3e7f0;"></div>
<div class="r" style="left:412px;top:412px;width:50px;letter-spacing:-0.6px">1,800.00</div>
<div style="position:absolute;left:466px;top:410px;width:53px;height:19px;background:#fff;"></div>
<div style="position:absolute;left:519px;top:410px;width:1px;height:19px;background:#e3e7f0;"></div>
<div class="r" style="left:466px;top:412px;width:50px;letter-spacing:-0.6px">1,800.00</div>
<div style="position:absolute;left:520px;top:410px;width:53px;height:19px;background:#fff;"></div>
<div style="position:absolute;left:573px;top:410px;width:1px;height:19px;background:#e3e7f0;"></div>
<div class="r" style="left:520px;top:412px;width:50px;letter-spacing:-0.6px">1,800.00</div>
<div style="position:absolute;left:574px;top:410px;width:53px;height:19px;background:#fff;"></div>
<div style="position:absolute;left:627px;top:410px;width:1px;height:19px;background:#e3e7f0;"></div>
<div class="r" style="left:574px;top:412px;width:50px;letter-spacing:-0.6px">1,800.00</div>
<div style="position:absolute;left:5px;top:514px;width:720px;height:1px;background:#a0a0a0;"></div>
<svg style="position:absolute;left:7px;top:527px" width="16" height="16" viewBox="0 0 16 16"><defs><linearGradient id="hg" x1="0" y1="0" x2="0" y2="1"><stop offset="0" stop-color="#8cc2ec"/><stop offset="0.45" stop-color="#3d8fd4"/><stop offset="0.55" stop-color="#2b80c8"/><stop offset="1" stop-color="#5eaae2"/></linearGradient></defs><circle cx="8" cy="8" r="7.2" fill="url(#hg)" stroke="#5a6268" stroke-width="1.4"/><path d="M5.6 6.6 C5.6 5.1 6.6 4.4 8.1 4.4 C9.6 4.4 10.6 5.2 10.6 6.4 C10.6 7.9 8.8 8.0 8.8 9.6" fill="none" stroke="#fff" stroke-width="1.9"/><rect x="7.5" y="10.6" width="2.4" height="2.2" fill="#fff"/></svg>
<div class="t" style="left:31px;top:528px;color:#0000ff;text-decoration:underline;text-decoration-skip-ink:none">Help</div>
<div style="position:absolute;left:564px;top:524px;width:74px;height:21px;background:#e1e1e1;border:2px solid #0078d7"></div>
<div class="c" style="left:564px;top:528px;width:74px;letter-spacing:0">OK</div>
<div style="position:absolute;left:648px;top:524px;width:76px;height:21px;background:#e1e1e1;border:1px solid #adadad"></div>
<div class="c" style="left:648px;top:528px;width:76px">Cancel</div>
</body></html>
